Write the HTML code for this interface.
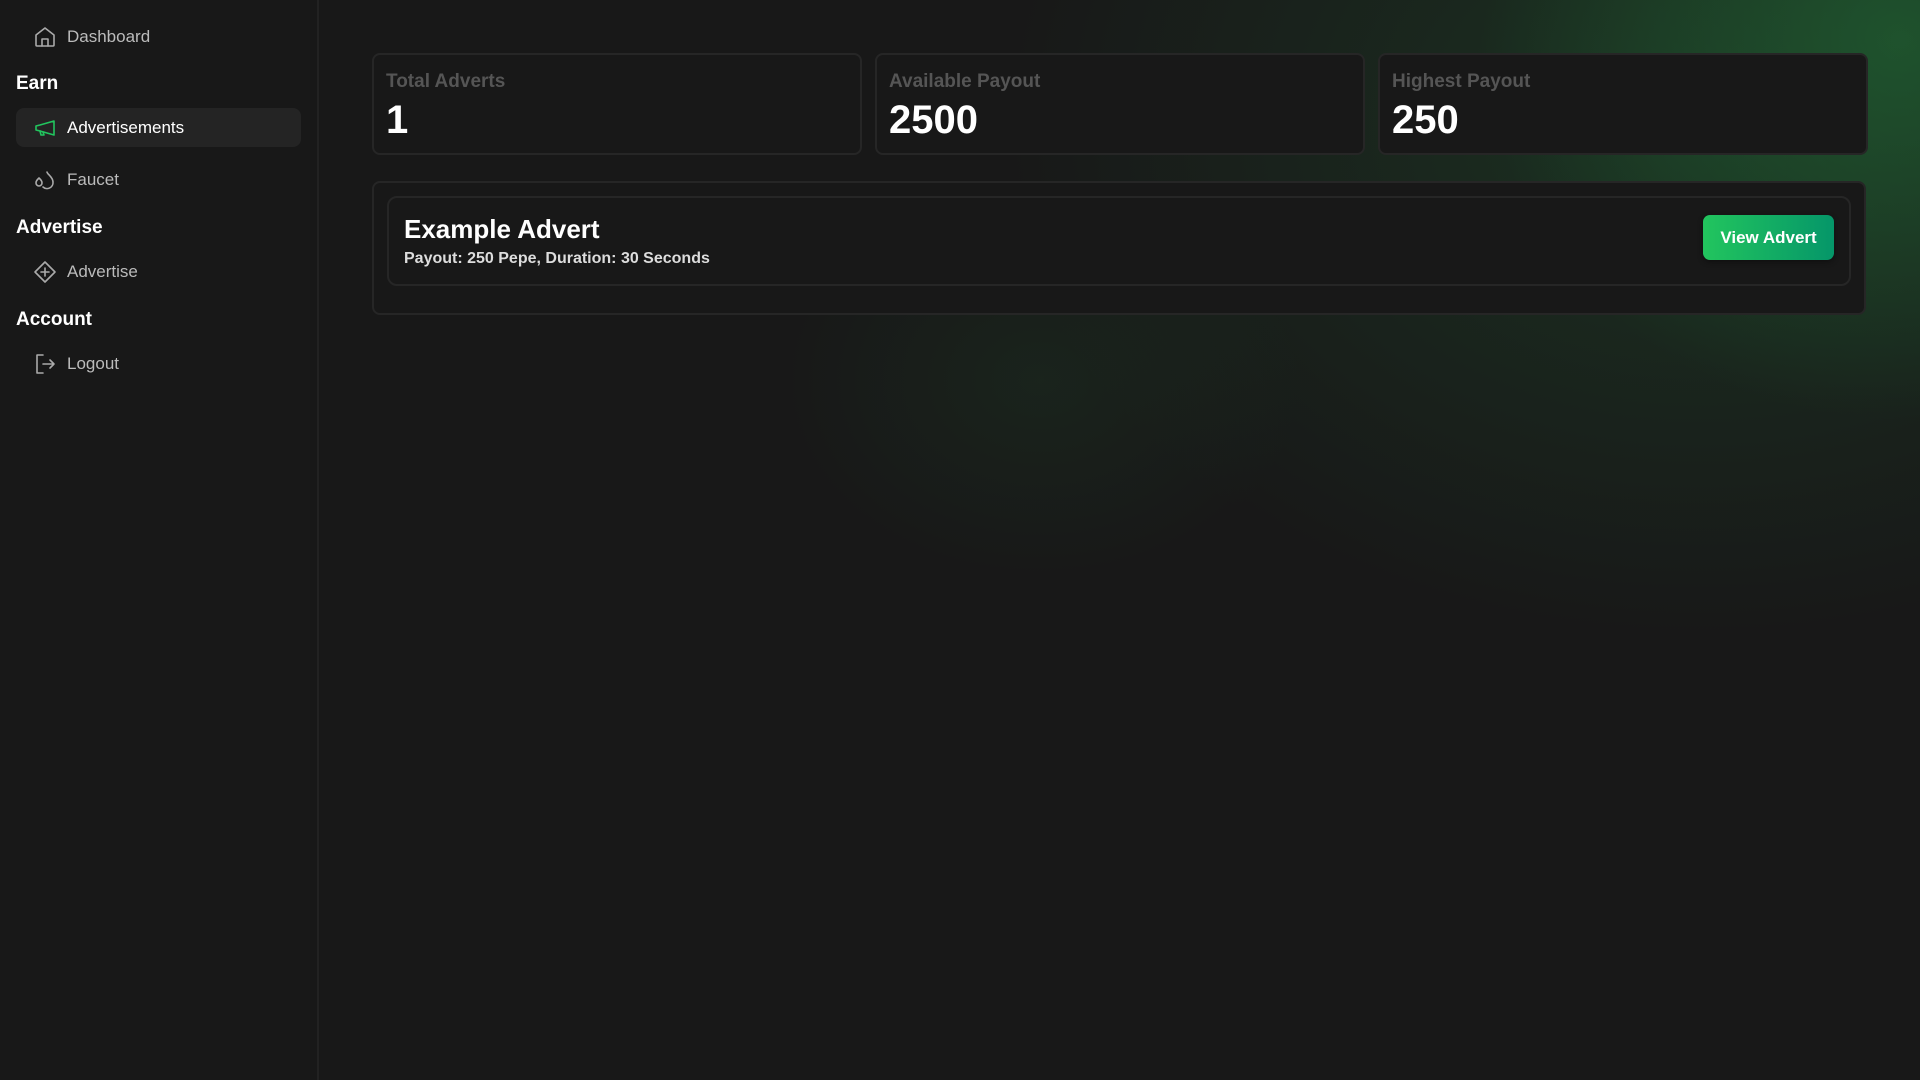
<!DOCTYPE html>
<html><head><meta charset="utf-8"><style>
*{box-sizing:border-box;margin:0;padding:0}
body{width:1920px;height:1080px;overflow:hidden;background:#181818;font-family:"Liberation Sans",sans-serif;color:#fff;position:relative}
.glow{position:absolute;inset:0;background:
radial-gradient(ellipse 420px 380px at 1900px 40px,rgba(34,110,55,.6),rgba(34,110,55,0) 100%),
radial-gradient(ellipse 700px 520px at 1700px 120px,rgba(30,80,45,.45),rgba(30,80,45,0) 100%),
radial-gradient(ellipse 260px 200px at 1040px 380px,rgba(30,70,40,.25),rgba(30,70,40,0) 100%);}
.side{position:absolute;left:0;top:0;width:319px;height:1080px;background:#181818;border-right:2px solid #222}
.item{position:absolute;left:16px;width:285px;height:39px;display:flex;align-items:center;padding-left:17px;font-size:17px;color:#bbb;border-radius:8px}
.item svg{width:24px;height:24px;margin-right:10px;fill:none;stroke:#aaa;stroke-width:1.6;stroke-linecap:round;stroke-linejoin:round}
.item.act{background:#242424;color:#fff}
.item.act svg{stroke:#22c55e}
.h{position:absolute;left:16px;font-size:19px;font-weight:bold;color:#fff}
.card{position:absolute;top:53px;height:102px;width:490px;background:#181818;border:2px solid #262626;border-radius:8px;padding:16px 12px}
.lbl{font-size:19px;color:#555;font-weight:bold}
.val{font-size:40px;font-weight:bold;margin-top:5px}
.outer{position:absolute;left:372px;top:181px;width:1494px;height:134px;background:#181818;border:2px solid #262626;border-radius:8px}
.inner{position:absolute;left:13px;top:13px;right:13px;height:90px;border:2px solid #262626;border-radius:10px}
.t{position:absolute;left:15px;top:16px;font-size:26px;font-weight:bold}
.s{position:absolute;left:15px;top:52px;font-size:16px;font-weight:bold;color:#ddd}
.btn{position:absolute;right:15px;top:17px;width:131px;height:45px;border-radius:7px;background:linear-gradient(90deg,#22c55e,#059669);font-weight:bold;font-size:17px;display:flex;align-items:center;justify-content:center;box-shadow:0 2px 6px rgba(0,0,0,.4)}
</style></head><body>
<div class="glow"></div>
<div class="side">
<div class="item" style="top:17px"><svg viewBox="0 0 24 24"><path d="M3 10l9-7 9 7v10a1 1 0 0 1-1 1H4a1 1 0 0 1-1-1z"/><path d="M9 21v-7h6v7"/></svg>Dashboard</div>
<div class="h" style="top:73px">Earn</div>
<div class="item act" style="top:108px"><svg viewBox="0 0 24 24"><path d="M3 10v4l4 1 14 4V5L7 9z"/><path d="M7 15l1 4h3l-1-3"/></svg>Advertisements</div>
<div class="item" style="top:160px"><svg viewBox="0 0 24 24"><path d="M6 10c-2 2-3 3-3 5a3 3 0 0 0 6 0c0-2-1-3-3-5z"/><path d="M14 4c0 2 6 5 6 10a6 6 0 0 1-10 5"/></svg>Faucet</div>
<div class="h" style="top:217px">Advertise</div>
<div class="item" style="top:252px"><svg viewBox="0 0 24 24"><path d="M12 2l10 10-10 10L2 12z"/><path d="M12 8v8M8 12h8"/></svg>Advertise</div>
<div class="h" style="top:309px">Account</div>
<div class="item" style="top:344px"><svg viewBox="0 0 24 24"><path d="M10 3H4v18h6"/><path d="M10 12h11M17 8l4 4-4 4"/></svg>Logout</div>
</div>
<div class="card" style="left:372px"><div class="lbl">Total Adverts</div><div class="val">1</div></div>
<div class="card" style="left:875px"><div class="lbl">Available Payout</div><div class="val">2500</div></div>
<div class="card" style="left:1378px"><div class="lbl">Highest Payout</div><div class="val">250</div></div>
<div class="outer"><div class="inner">
<div class="t">Example Advert</div>
<div class="s">Payout: 250 Pepe, Duration: 30 Seconds</div>
<div class="btn">View Advert</div>
</div></div>
</body></html>
